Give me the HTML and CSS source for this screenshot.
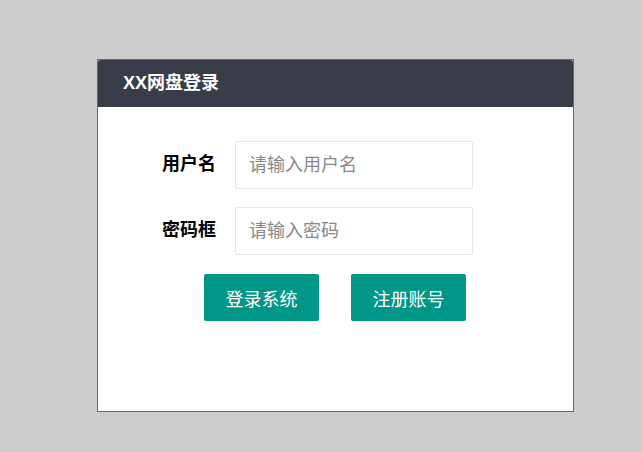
FILE: index.html
```html
<!DOCTYPE html>
<html lang="zh-CN">
<head>
<meta charset="utf-8">
<title>XX网盘登录</title>
<link rel="stylesheet" href="styles.css">
</head>
<body>
<div class="box">
  <div class="header">XX网盘登录</div>
  <form class="form">
    <div class="row">
      <label class="label">用户名</label>
      <input class="input" type="text" placeholder="请输入用户名">
    </div>
    <div class="row">
      <label class="label">密码框</label>
      <input class="input" type="password" placeholder="请输入密码">
    </div>
    <div class="actions">
      <button type="button" class="btn">登录系统</button>
      <button type="button" class="btn">注册账号</button>
    </div>
  </form>
</div>
</body>
</html>
```
FILE: styles.css
```css
html, body {
  margin: 0;
  padding: 0;
  background: #cccccc;
  font-family: "Liberation Sans", "Noto Sans CJK SC", sans-serif;
}
body {
  padding: 59px 0 0 97px;
}
.box {
  box-sizing: border-box;
  width: 477px;
  height: 353px;
  background: #ffffff;
  border: 1px solid #1f8a80;
}
.header {
  height: 47px;
  background: #393d49;
  border-radius: 2px 2px 0 0;
  color: #ffffff;
  font-size: 18px;
  font-weight: bold;
  line-height: 46px;
  padding-left: 25px;
}
.form {
  padding-top: 34px;
  display: flex;
  flex-direction: column;
  gap: 18px;
}
.row {
  display: flex;
  align-items: center;
  gap: 19px;
}
.label {
  width: 118px;
  text-align: right;
  font-size: 18px;
  line-height: 24px;
  font-weight: bold;
  color: #000;
  padding-bottom: 3px;
}
.input {
  box-sizing: border-box;
  width: 238px;
  height: 48px;
  border: 1px solid #e6e6e6;
  border-radius: 2px;
  padding: 0 13px;
  font-family: inherit;
  font-size: 18px;
  color: #333;
  outline: none;
}
.input::placeholder {
  color: #888888;
}
.actions {
  display: flex;
  gap: 32px;
  padding-left: 106px;
  margin-top: 1px;
}
.btn {
  width: 115px;
  height: 47px;
  border: none;
  border-radius: 2px;
  background: #009688;
  color: #ffffff;
  font-family: inherit;
  font-size: 18px;
  cursor: pointer;
}
```
